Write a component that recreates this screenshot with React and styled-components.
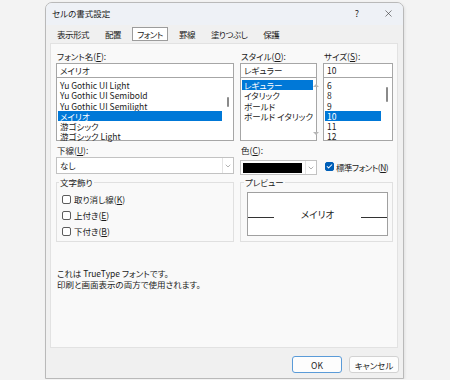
import React from "react"
import styled, { createGlobalStyle } from "styled-components"
import { ChevronDown, Check, X } from "lucide-react"

const fonts = ["Yu Gothic UI Light", "Yu Gothic UI Semibold", "Yu Gothic UI Semilight", "メイリオ", "游ゴシック", "游ゴシック Light"]
const styles = ["レギュラー", "イタリック", "ボールド", "ボールド イタリック"]
const sizes = ["6", "8", "9", "10", "11", "12"]

function Scroll({ arrows, thumbTop, thumbHeight }) {
  return (
    <ScrollTrack $arrows={arrows}>
      {arrows ? (
        <>
          <Arrow $up />
          <Arrow />
        </>
      ) : (
        <Thumb style={{ marginTop: thumbTop, height: thumbHeight }} />
      )}
    </ScrollTrack>
  )
}

function List({ items, selected, children }) {
  return (
    <ListBox>
      <ListItems>
        {items.map((it) => (
          <Item key={it} $selected={it === selected}>
            {it}
          </Item>
        ))}
      </ListItems>
      {children}
    </ListBox>
  )
}

function CheckRow({ checked, tight, children }) {
  return (
    <CheckLine $tight={tight}>
      <CheckBox $checked={checked}>
        {checked && <Check size={7} color="#fff" strokeWidth={3.5} />}
      </CheckBox>
      <span>{children}</span>
    </CheckLine>
  )
}

export default function App() {
  return (
    <>
      <GlobalStyle />
      <Dialog>
        <TitleBar>
          <Title>セルの書式設定</Title>
          <TitleButton $w={32}>?</TitleButton>
          <TitleButton $w={30}>
            <X size={11} strokeWidth={1.3} color="#333" />
          </TitleButton>
        </TitleBar>
        <TabRow>
          <Tab>表示形式</Tab>
          <Tab>配置</Tab>
          <Tab $active>フォント</Tab>
          <Tab>罫線</Tab>
          <Tab>塗りつぶし</Tab>
          <Tab>保護</Tab>
        </TabRow>
        <Panel>
          <FormGrid>
            <Field>
              <Label>フォント名(<u>F</u>):</Label>
              <TextBox>メイリオ</TextBox>
              <List items={fonts} selected="メイリオ">
                <Scroll thumbTop={19} thumbHeight={10} />
              </List>
            </Field>
            <Field>
              <Label>スタイル(<u>O</u>):</Label>
              <TextBox>レギュラー</TextBox>
              <List items={styles} selected="レギュラー">
                <Scroll arrows />
              </List>
            </Field>
            <Field>
              <Label>サイズ(<u>S</u>):</Label>
              <TextBox>10</TextBox>
              <List items={sizes} selected="10">
                <Scroll thumbTop={9} thumbHeight={15} />
              </List>
            </Field>

            <Field>
              <Label>下線(<u>U</u>):</Label>
              <Dropdown>
                <DropValue>なし</DropValue>
                <DropButton>
                  <ChevronDown size={8} color="#666" strokeWidth={1.5} />
                </DropButton>
              </Dropdown>
            </Field>
            <Field>
              <Label>色(<u>C</u>):</Label>
              <Dropdown $small>
                <Swatch />
                <DropButton>
                  <ChevronDown size={8} color="#666" strokeWidth={1.5} />
                </DropButton>
              </Dropdown>
            </Field>
            <NormalFont>
              <CheckRow checked tight>
                標準フォント(<u>N</u>)
              </CheckRow>
            </NormalFont>

            <Group>
              <Legend>文字飾り</Legend>
              <CheckRow>
                取り消し線(<u>K</u>)
              </CheckRow>
              <CheckRow>
                上付き(<u>E</u>)
              </CheckRow>
              <CheckRow>
                下付き(<u>B</u>)
              </CheckRow>
            </Group>
            <Group $preview>
              <Legend>プレビュー</Legend>
              <PreviewBox>
                <PreviewLine />
                <PreviewText>メイリオ</PreviewText>
                <PreviewLine />
              </PreviewBox>
            </Group>
          </FormGrid>
          <Info>
            これは TrueType フォントです。
            <br />
            印刷と画面表示の両方で使用されます。
          </Info>
        </Panel>
        <Footer>
          <Button $primary>OK</Button>
          <Button>キャンセル</Button>
        </Footer>
      </Dialog>
    </>
  )
}

const GlobalStyle = createGlobalStyle`
  body {
    margin: 0;
    background: #f3f3f3;
    font-family: "Noto Sans CJK JP", "Noto Sans", sans-serif;
    font-size: 8.5px;
    color: #1b1b1b;
    font-feature-settings: "palt";
  }
  u {
    text-underline-offset: 1px;
  }
`
const Dialog = styled.div`
  margin: 2px 0 0 45px;
  width: 359px;
  height: 377px;
  box-sizing: border-box;
  border: 1px solid #b9b9b9;
  border-radius: 7px 7px 0 0;
  background: #f0f0f0;
  display: flex;
  flex-direction: column;
  overflow: hidden;
  box-shadow: 1px 1px 3px rgba(0, 0, 0, 0.08);
`
const TitleBar = styled.div`
  height: 22px;
  flex: 0 0 22px;
  display: flex;
  align-items: center;
  padding: 0 0 2px 6px;
  box-sizing: border-box;
  background: #eef1f6;
`
const Title = styled.div`
  flex: 1;
`
const TitleButton = styled.div`
  width: ${(p) => p.$w}px;
  height: 20px;
  display: flex;
  align-items: center;
  justify-content: center;
  font-size: 9px;
`
const TabRow = styled.div`
  height: 18px;
  flex: 0 0 18px;
  display: flex;
  align-items: center;
  gap: 6px;
  padding-left: 6px;
`
const Tab = styled.div`
  height: 14px;
  line-height: 12px;
  padding: 0 4px;
  box-sizing: border-box;
  letter-spacing: -0.5px;
  border: 1px solid ${(p) => (p.$active ? "#9c9c9c" : "transparent")};
  background: ${(p) => (p.$active ? "#fff" : "transparent")};
`
const Panel = styled.div`
  height: 305px;
  flex: 0 0 305px;
  box-sizing: border-box;
  margin: 0 5px 0 4px;
  border: 1px solid #e2e2e2;
  background: #f9f9f9;
  padding: 7px 4px 0 5px;
`
const FormGrid = styled.div`
  display: grid;
  grid-template-columns: 178px 77px 70px;
  column-gap: 6px;
  row-gap: 4px;
`
const Field = styled.div`
  display: flex;
  flex-direction: column;
`
const Label = styled.div`
  height: 11px;
  line-height: 11px;
  margin-bottom: 1px;
  padding-left: 1px;
`
const TextBox = styled.div`
  height: 15px;
  box-sizing: border-box;
  border: 1px solid #a6a6a6;
  background: #fff;
  padding: 0 3px;
  line-height: 13px;
`
const ListBox = styled.div`
  height: 64px;
  margin-top: -1px;
  box-sizing: border-box;
  border: 1px solid #a6a6a6;
  background: #fff;
  display: flex;
`
const ListItems = styled.div`
  flex: 1;
  padding: 2px 0 0 1px;
`
const Item = styled.div`
  height: 10.3px;
  line-height: 10.3px;
  padding-left: 2px;
  white-space: nowrap;
  overflow: hidden;
  background: ${(p) => (p.$selected ? "#0078d7" : "transparent")};
  color: ${(p) => (p.$selected ? "#fff" : "inherit")};
`
const ScrollTrack = styled.div`
  width: 11px;
  display: flex;
  flex-direction: column;
  align-items: center;
  justify-content: ${(p) => (p.$arrows ? "space-between" : "flex-start")};
  padding: ${(p) => (p.$arrows ? "6px 0 5px" : "0")};
`
const Thumb = styled.div`
  width: 2px;
  border-radius: 1px;
  background: #8a8a8a;
`
const Arrow = styled.div`
  width: 0;
  height: 0;
  border-left: 3px solid transparent;
  border-right: 3px solid transparent;
  ${(p) => (p.$up ? "border-bottom: 3px solid #b5b5b5;" : "border-top: 3px solid #b5b5b5;")}
`
const Dropdown = styled.div`
  height: ${(p) => (p.$small ? 15 : 17)}px;
  margin-top: ${(p) => (p.$small ? 3 : 0)}px;
  box-sizing: border-box;
  border: 1px solid #c2c2c2;
  background: #fff;
  display: flex;
  align-items: stretch;
`
const DropValue = styled.div`
  flex: 1;
  padding-left: 3px;
  line-height: 15px;
`
const Swatch = styled.div`
  flex: 1;
  margin: 2px 3px 1px 2px;
  background: #000;
`
const DropButton = styled.div`
  width: 10px;
  border-left: 1px solid #e3e3e3;
  display: flex;
  align-items: center;
  justify-content: center;
`
const NormalFont = styled.div`
  align-self: end;
  height: 17px;
  display: flex;
  align-items: center;
  padding-left: 2px;
`
const CheckLine = styled.div`
  height: 16px;
  display: flex;
  align-items: center;
  gap: ${(p) => (p.$tight ? 2 : 3)}px;
  white-space: nowrap;
  letter-spacing: ${(p) => (p.$tight ? "-0.5px" : "0")};
`
const CheckBox = styled.div`
  width: 9px;
  height: 9px;
  flex: 0 0 9px;
  box-sizing: border-box;
  border: 1px solid ${(p) => (p.$checked ? "#005fb8" : "#5c5c5c")};
  border-radius: 2px;
  background: ${(p) => (p.$checked ? "#005fb8" : "#fff")};
  display: flex;
  align-items: center;
  justify-content: center;
`
const Group = styled.fieldset`
  grid-column: ${(p) => (p.$preview ? "2 / 4" : "1")};
  margin: -2px 0 0;
  min-width: 0;
  border: 1px solid #e0e0e0;
  padding: ${(p) => (p.$preview ? "4px 4px 5px 6px" : "3px 5px 2px 5px")};
`
const Legend = styled.legend`
  margin-left: -3px;
  padding: 0 1px;
  line-height: 11px;
`
const PreviewBox = styled.div`
  height: 44px;
  box-sizing: border-box;
  border: 1px solid #a0a0a0;
  background: #fff;
  display: flex;
  align-items: center;
`
const PreviewLine = styled.div`
  width: 26px;
  height: 1px;
  margin-top: 6px;
  background: #333;
`
const PreviewText = styled.div`
  flex: 1;
  text-align: center;
  font-size: 9.5px;
`
const Info = styled.div`
  margin-top: 26px;
  padding-left: 1px;
  line-height: 11px;
`
const Footer = styled.div`
  flex: 1;
  display: flex;
  justify-content: flex-end;
  align-items: flex-start;
  gap: 7px;
  padding: 8px 4px 0 0;
`
const Button = styled.button`
  width: 50px;
  height: 17px;
  box-sizing: border-box;
  border: 1px solid ${(p) => (p.$primary ? "#5a9bd8" : "#d2d2d2")};
  border-radius: 3px;
  background: #fdfdfd;
  font-family: inherit;
  font-size: 8.5px;
  color: #1b1b1b;
  padding: 0;
  font-feature-settings: "palt";
`
